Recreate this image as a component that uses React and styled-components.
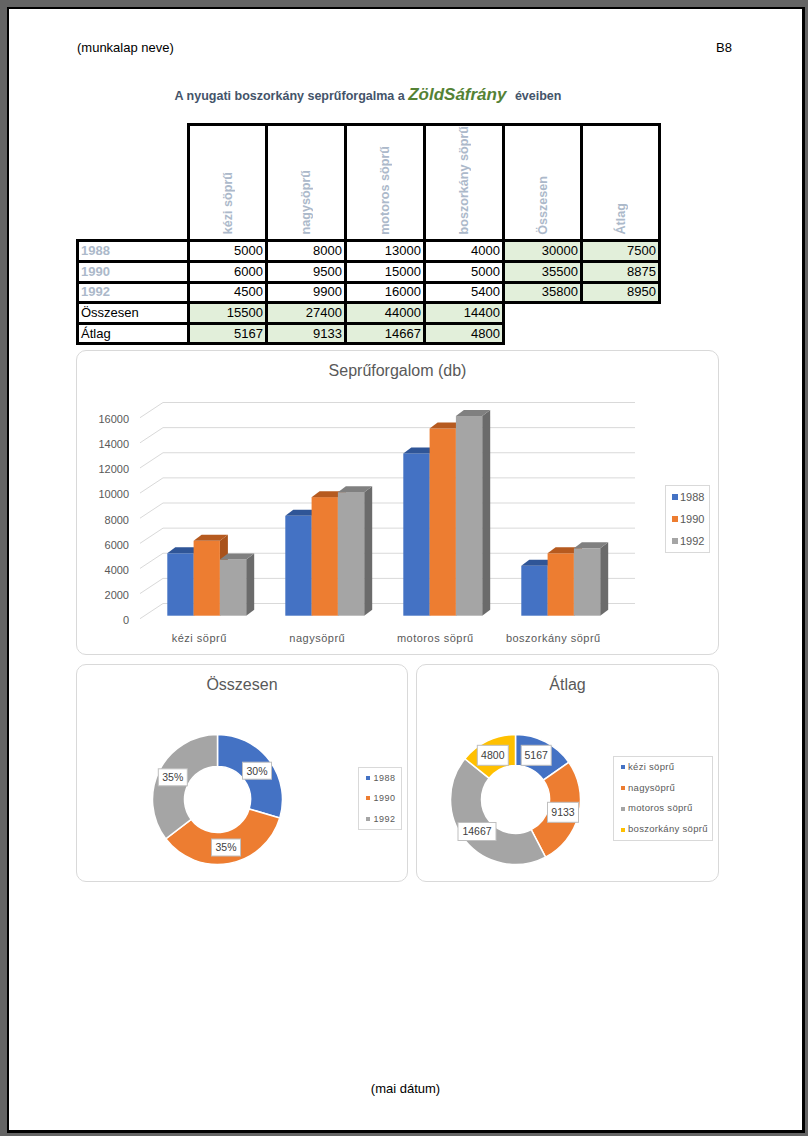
import React from 'react';
import styled, { createGlobalStyle } from 'styled-components';

const Global = createGlobalStyle`
  html, body { margin: 0; padding: 0; background: #646464; }
  body { font-family: "Liberation Sans", Arial, sans-serif; }
`;

const Page = styled.div`
  margin: 7px 0 0 7px;
  width: 793px;
  height: 1121px;
  background: #fff;
  border-style: solid;
  border-color: #000;
  border-width: 2px 3px 3px 2px;
  display: flex;
  flex-direction: column;
`;

const Content = styled.div`
  padding: 0 70px 0 67px;
  display: flex;
  flex-direction: column;
`;

const Header = styled.div`
  margin-top: 31px;
  display: flex;
  justify-content: space-between;
  font-size: 13px;
  line-height: 16px;
  color: #000;
  padding-left: 1px;
`;

const Title = styled.div`
  width: 584px;
  margin-top: 29px;
  text-align: center;
  font-size: 12.5px;
  font-weight: 700;
  line-height: 20px;
  color: #44546a;
`;

const Brand = styled.span`
  font-size: 17px;
  font-style: italic;
  font-weight: 700;
  color: #548235;
  margin-right: 5px;
`;

const Sheet = styled.table`
  margin-top: 17px;
  border-collapse: collapse;
  table-layout: fixed;
  width: 582px;
`;

const Th = styled.th`
  border: ${p => (p.$blank ? 'none' : '3px solid #000')};
  height: 105px;
  padding: 0 0 1px;
  vertical-align: bottom;
  text-align: center;
  overflow: hidden;
`;

const Vertical = styled.span`
  display: inline-block;
  writing-mode: vertical-rl;
  transform: rotate(180deg);
  font-size: 12.6px;
  font-weight: 700;
  color: #acb9ca;
  line-height: 14px;
  white-space: nowrap;
`;

const Row = styled.tr`
  height: 20.6px;
`;

const Td = styled.td`
  border: ${p => (p.$blank ? 'none' : '3px solid #000')};
  background: ${p => (p.$green ? '#e2efda' : 'transparent')};
  text-align: ${p => (p.$label ? 'left' : 'right')};
  padding: 0 2px;
  font-size: 13px;
  line-height: 14px;
  color: ${p => (p.$year ? '#acb9ca' : '#000')};
  font-weight: ${p => (p.$year ? 700 : 400)};
`;

const Card = styled.div`
  box-sizing: border-box;
  border: 1px solid #d9d9d9;
  border-radius: 10px;
  background: #fff;
  width: ${p => p.$w}px;
  height: ${p => p.$h}px;
  display: flex;
  flex-direction: column;
`;

const ChartTitle = styled.div`
  padding-top: 10px;
  margin-bottom: 10px;
  text-align: center;
  font-size: 16px;
  line-height: 20px;
  color: #595959;
`;

const ChartBody = styled.div`
  flex: 1;
  display: flex;
  align-items: center;
`;

const ChartSvg = styled.svg`
  flex: none;
  align-self: stretch;
  font-family: "Liberation Sans", Arial, sans-serif;
  text { fill: #595959; font-size: 11px; }
`;

const Legend = styled.div`
  flex: none;
  border: 1px solid #d9d9d9;
  padding: 0 ${p => p.$padR}px 0 ${p => p.$padL}px;
  margin-bottom: ${p => p.$mb || 0}px;
  display: flex;
  flex-direction: column;
`;

const LegendItem = styled.div`
  display: flex;
  align-items: center;
  font-size: ${p => p.$size}px;
  line-height: ${p => p.$line}px;
  letter-spacing: ${p => p.$spacing}px;
  color: #595959;
  white-space: nowrap;
`;

const Swatch = styled.span`
  width: ${p => p.$s}px;
  height: ${p => p.$s}px;
  background: ${p => p.$c};
  margin-right: ${p => p.$gap}px;
  flex: none;
`;

const CardsRow = styled.div`
  margin-top: ${p => p.$mt}px;
  display: flex;
  gap: 8px;
`;

const Footer = styled.div`
  margin-top: auto;
  margin-bottom: 33px;
  text-align: center;
  font-size: 13px;
  line-height: 16px;
  color: #000;
`;

const BLUE = '#4472c4';
const ORANGE = '#ed7d31';
const GRAY = '#a5a5a5';
const YELLOW = '#ffc000';

const series = [
  { name: '1988', front: BLUE, top: '#2f5597', side: '#2d508f' },
  { name: '1990', front: ORANGE, top: '#b65a1f', side: '#a9521b' },
  { name: '1992', front: GRAY, top: '#808080', side: '#6b6b6b' },
];

const cats = ['kézi söprű', 'nagysöprű', 'motoros söprű', 'boszorkány söprű'];
const barValues = [
  [5000, 6000, 4500],
  [8000, 9500, 9900],
  [13000, 15000, 16000],
  [4000, 5000, 5400],
];

const rows = [
  ['1988', 5000, 8000, 13000, 4000, 30000, 7500],
  ['1990', 6000, 9500, 15000, 5000, 35500, 8875],
  ['1992', 4500, 9900, 16000, 5400, 35800, 8950],
];
const totals = [
  ['Összesen', 15500, 27400, 44000, 14400],
  ['Átlag', 5167, 9133, 14667, 4800],
];

function Bar({ x0, w, bottom, top, c }) {
  const dx = 8;
  const dy = -6;
  const x1 = x0 + w;
  return (
    <g>
      <polygon points={`${x1},${top} ${x1 + dx},${top + dy} ${x1 + dx},${bottom + dy} ${x1},${bottom}`} fill={c.side} />
      <rect x={x0} y={top} width={w} height={bottom - top} fill={c.front} />
      <polygon points={`${x0},${top} ${x0 + dx},${top + dy} ${x1 + dx},${top + dy} ${x1},${top}`} fill={c.top} />
    </g>
  );
}

function BarChart() {
  const ticks = [0, 2000, 4000, 6000, 8000, 10000, 12000, 14000, 16000];
  const bottom = 224.7;
  const bw = 26.3;
  return (
    <ChartSvg width="588" height="263" viewBox="0 0 588 263">
      {ticks.map((t, k) => {
        const ly = 229 - k * 25.125;
        return (
          <g key={t}>
            <polyline points={`63,${ly - 1.3} 86,${ly - 16.5} 558,${ly - 16.5}`} fill="none" stroke="#d9d9d9" strokeWidth="1" />
            <text x="52" y={ly + 4} textAnchor="end">{t}</text>
          </g>
        );
      })}
      {barValues.map((vals, g) =>
        vals.map((v, s) => {
          const x0 = 90.3 + g * 118 + s * bw;
          return <Bar key={`${g}-${s}`} x0={x0} w={bw} bottom={bottom} top={bottom - v * 0.01248} c={series[s]} />;
        })
      )}
      {cats.map((c, g) => (
        <text key={c} x={122.3 + g * 118} y={251} textAnchor="middle" letterSpacing="0.5">{c}</text>
      ))}
    </ChartSvg>
  );
}

function pt(cx, cy, rad, a) {
  const t = (a * Math.PI) / 180;
  return [cx + rad * Math.sin(t), cy - rad * Math.cos(t)];
}

function arc(cx, cy, R, r, a0, a1) {
  const large = a1 - a0 > 180 ? 1 : 0;
  const [x0, y0] = pt(cx, cy, R, a0);
  const [x1, y1] = pt(cx, cy, R, a1);
  const [x2, y2] = pt(cx, cy, r, a1);
  const [x3, y3] = pt(cx, cy, r, a0);
  return `M${x0},${y0} A${R},${R} 0 ${large} 1 ${x1},${y1} L${x2},${y2} A${r},${r} 0 ${large} 0 ${x3},${y3} Z`;
}

function Donut({ w, h, cx, cy, R, r, data, labels }) {
  const total = data.reduce((a, d) => a + d.v, 0);
  let acc = 0;
  return (
    <ChartSvg width={w} height={h} viewBox={`0 0 ${w} ${h}`}>
      {data.map((d, i) => {
        const a0 = (acc / total) * 360;
        acc += d.v;
        const a1 = (acc / total) * 360;
        return <path key={i} d={arc(cx, cy, R, r, a0, a1)} fill={d.c} stroke="#fff" strokeWidth="1.5" />;
      })}
      {labels.map((l, i) => (
        <g key={i}>
          <rect x={l.x - l.w / 2} y={l.y - l.h / 2} width={l.w} height={l.h} fill="#fff" stroke="#bfbfbf" strokeWidth="1" />
          <text x={l.x} y={l.y + 3.8} textAnchor="middle" style={{ fill: '#404040', fontSize: '10.5px' }}>{l.t}</text>
        </g>
      ))}
    </ChartSvg>
  );
}

export default function App() {
  return (
    <>
      <Global />
      <Page>
        <Content>
          <Header>
            <span>(munkalap neve)</span>
            <span>B8</span>
          </Header>
          <Title>
            A nyugati boszorkány seprűforgalma a <Brand>ZöldSáfrány</Brand> éveiben
          </Title>
          <Sheet>
            <colgroup>
              <col style={{ width: 111 }} />
              <col style={{ width: 78 }} />
              <col style={{ width: 79 }} />
              <col style={{ width: 79 }} />
              <col style={{ width: 79 }} />
              <col style={{ width: 78 }} />
              <col style={{ width: 78 }} />
            </colgroup>
            <thead>
              <tr>
                <Th $blank />
                {['kézi söprű', 'nagysöprű', 'motoros söprű', 'boszorkány söprű', 'Összesen', 'Átlag'].map(h => (
                  <Th key={h}><Vertical>{h}</Vertical></Th>
                ))}
              </tr>
            </thead>
            <tbody>
              {rows.map(r => (
                <Row key={r[0]}>
                  <Td $label $year>{r[0]}</Td>
                  {r.slice(1).map((v, i) => (
                    <Td key={i} $green={i >= 4}>{v}</Td>
                  ))}
                </Row>
              ))}
              {totals.map(r => (
                <Row key={r[0]}>
                  <Td $label>{r[0]}</Td>
                  {r.slice(1).map((v, i) => (
                    <Td key={i} $green>{v}</Td>
                  ))}
                  <Td $blank />
                  <Td $blank />
                </Row>
              ))}
            </tbody>
          </Sheet>

          <CardsRow $mt={5}>
            <Card $w={643} $h={305}>
              <ChartTitle>Seprűforgalom (db)</ChartTitle>
              <ChartBody>
                <BarChart />
                <Legend $padL={6} $padR={5} $mb={7}>
                  {series.map(s => (
                    <LegendItem key={s.name} $size={11} $line={22} $spacing={0}>
                      <Swatch $s={6} $c={s.front} $gap={2} />
                      {s.name}
                    </LegendItem>
                  ))}
                </Legend>
              </ChartBody>
            </Card>
          </CardsRow>

          <CardsRow $mt={9}>
            <Card $w={332} $h={218}>
              <ChartTitle>Összesen</ChartTitle>
              <ChartBody>
                <Donut
                  w={281}
                  h={186}
                  cx={140.5}
                  cy={94.5}
                  R={65}
                  r={33}
                  data={[
                    { v: 30000, c: BLUE },
                    { v: 35500, c: ORANGE },
                    { v: 35800, c: GRAY },
                  ]}
                  labels={[
                    { x: 180, y: 65.7, w: 29, h: 17, t: '30%' },
                    { x: 149, y: 142.5, w: 29, h: 17, t: '35%' },
                    { x: 95.8, y: 72.3, w: 29, h: 17, t: '35%' },
                  ]}
                />
                <Legend $padL={6.5} $padR={5}>
                  {series.map(s => (
                    <LegendItem key={s.name} $size={9} $line={20.5} $spacing={0.5}>
                      <Swatch $s={4} $c={s.front} $gap={4} />
                      {s.name}
                    </LegendItem>
                  ))}
                </Legend>
              </ChartBody>
            </Card>
            <Card $w={303} $h={218}>
              <ChartTitle>Átlag</ChartTitle>
              <ChartBody>
                <Donut
                  w={196}
                  h={186}
                  cx={98.5}
                  cy={94.5}
                  R={65}
                  r={34}
                  data={[
                    { v: 5167, c: BLUE },
                    { v: 9133, c: ORANGE },
                    { v: 14667, c: GRAY },
                    { v: 4800, c: YELLOW },
                  ]}
                  labels={[
                    { x: 119.2, y: 50.3, w: 30, h: 20, t: '5167' },
                    { x: 146, y: 107.3, w: 31, h: 20, t: '9133' },
                    { x: 60, y: 126.5, w: 38, h: 18, t: '14667' },
                    { x: 75.8, y: 50.3, w: 31, h: 20, t: '4800' },
                  ]}
                />
                <Legend $padL={7} $padR={4}>
                  {cats.map((c, i) => (
                    <LegendItem key={c} $size={9.5} $line={20.75} $spacing={0.3}>
                      <Swatch $s={4} $c={[BLUE, ORANGE, GRAY, YELLOW][i]} $gap={3} />
                      {c}
                    </LegendItem>
                  ))}
                </Legend>
              </ChartBody>
            </Card>
          </CardsRow>
        </Content>
        <Footer>(mai dátum)</Footer>
      </Page>
    </>
  );
}
